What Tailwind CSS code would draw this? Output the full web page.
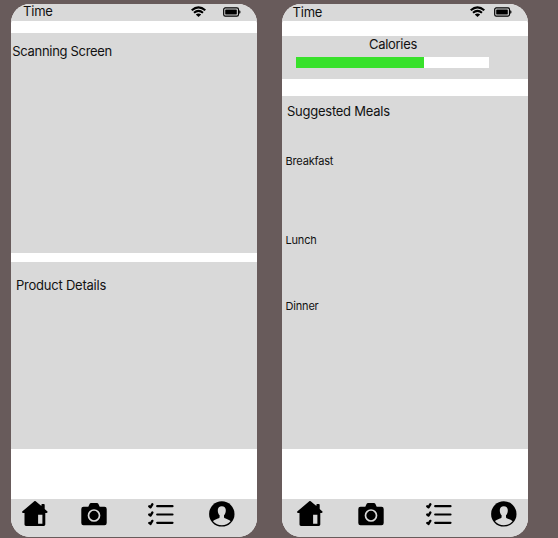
<!DOCTYPE html>
<html lang="en">
<head>
<meta charset="utf-8">
<title>Meal scanner</title>
<script src="https://cdn.jsdelivr.net/npm/@tailwindcss/browser@4"></script>
</head>
<body class="flex h-[538px] w-[558px] gap-[25px] overflow-hidden bg-[#685b5b] pt-[3.5px] pl-[10.5px] font-['Inter',sans-serif] text-[13px] leading-4 tracking-[-0.31px] text-[#111]">
<svg class="hidden">
  <symbol id="wifi" viewBox="0 0 15 11"><path d="M.7 4.3Q7.5-1.7 14.3 4.3M3 6.7Q7.5 3 12 6.7" fill="none" stroke="#000" stroke-width="2.1"/><path d="M4.8 8.4Q7.5 6.5 10.2 8.4L7.5 10.9Z"/></symbol>
  <symbol id="battery" viewBox="0 0 18 10"><rect x=".7" y=".9" width="14.8" height="8.2" rx="1.6" fill="none" stroke="#000" stroke-width="1.2"/><rect x="2.2" y="2.5" width="11.6" height="5" rx=".4"/><path d="M16.2 3.2q1.3.2 1.3 1.8t-1.3 1.8z"/></symbol>
  <symbol id="home" viewBox="0 0 26 26"><path fill-rule="evenodd" d="M12 .4q1-.9 2 0l5.4 4.7V3.9q0-.8.8-.8h1.7q.8 0 .8.8v4.2l2.5 2.2q.6.6.2 1.2t-1.2.4H23.3v11.7q0 1.4-1.5 1.4H4q-1.5 0-1.5-1.4V11.9H1q-.8 0-.9-.6t.4-1ZM16.1 13.7v9h4.3v-9Z"/></symbol>
  <symbol id="camera" viewBox="0 0 26 23"><path d="M7.3 3.8L8.7.8Q9.2.1 10 .1h6q.8 0 1.3.7l1.4 3h4.8q2.2 0 2.2 2.2v14q0 2.2-2.2 2.2h-21Q.3 22.2.3 20v-14Q.3 3.8 2.5 3.8Z"/><circle cx="13" cy="12.5" r="5.5" fill="none" stroke="#d9d9d9" stroke-width="1.7"/></symbol>
  <symbol id="list" viewBox="0 0 26 23"><path d="M9.2 3.2H24.5M9.2 11.5H24.5M9.2 19.8H24.5" stroke="#000" stroke-width="2.2" stroke-linecap="round"/><path d="M1.3 3.3L2.5 4.3 4.3 1.3M1.3 11.6l1.2 1 1.8-3M1.3 19.9l1.2 1 1.8-3" fill="none" stroke="#000" stroke-width="2.4" stroke-linecap="round" stroke-linejoin="round"/></symbol>
  <symbol id="user" viewBox="0 0 26 26"><circle cx="12.8" cy="12.9" r="12.7"/><path fill="#d9d9d9" d="M12.8 5.2c-2.7 0-4 1.8-4 4.2 0 2 .7 3.8 1.8 4.8v2.1c0 1.6-5.2 1.7-6.6 4C6.5 23 9.3 24.2 12.8 24.2S19.1 23 21.6 20.3c-1.4-2.3-6.6-2.4-6.6-4v-2.1C16.1 13.2 16.8 11.4 16.8 9.4c0-2.4-1.3-4.2-4-4.2Z"/></symbol>
</svg>

<main class="flex h-[533.5px] w-[246px] shrink-0 flex-col overflow-hidden rounded-[19px] bg-white">
  <header class="flex h-[17.5px] shrink-0 items-start bg-[#d9d9d9] pl-[12.5px]">
    <span class="-mt-[0.6px] w-[168px] tracking-[-0.2px]">Time</span>
    <svg class="mt-[2.5px] h-[11px] w-[15px]"><use href="#wifi"/></svg>
    <svg class="mt-[3.5px] ml-[17px] h-[10px] w-[18px]"><use href="#battery"/></svg>
  </header>
  <section class="mt-3 h-[219.5px] shrink-0 bg-[#d9d9d9] pt-[10px] pl-[1.8px]"><h1>Scanning Screen</h1></section>
  <section class="mt-[9px] h-[187px] shrink-0 bg-[#d9d9d9] pt-[15px] pl-[5.5px] tracking-[-0.23px]"><h2>Product Details</h2></section>
  <nav class="mt-auto flex h-[38px] shrink-0 items-start bg-[#d9d9d9] pl-[11.5px]">
    <svg class="mt-[1.5px] h-[26px] w-[26px]"><use href="#home"/></svg>
    <svg class="mt-[3.5px] ml-[33px] h-[23px] w-[26px]"><use href="#camera"/></svg>
    <svg class="mt-[3.5px] ml-[41px] h-[23px] w-[26px]"><use href="#list"/></svg>
    <svg class="mt-[2px] ml-[34.5px] h-[26px] w-[26px]"><use href="#user"/></svg>
  </nav>
</main>

<main class="flex h-[533.5px] w-[246.5px] shrink-0 flex-col overflow-hidden rounded-[19px] bg-white">
  <header class="flex h-[17.5px] shrink-0 items-start bg-[#d9d9d9] pl-[11px]">
    <span class="w-[177px] tracking-[-0.2px]">Time</span>
    <svg class="mt-[2.5px] h-[11px] w-[15px]"><use href="#wifi"/></svg>
    <svg class="mt-[3.5px] ml-[9.5px] h-[10px] w-[18px]"><use href="#battery"/></svg>
  </header>
  <section class="mt-[15px] h-[42.5px] shrink-0 bg-[#d9d9d9] pl-[14.5px]">
    <h1 class="w-[194px] text-center">Calories</h1>
    <div class="mt-[4.5px] h-[11px] w-[193px] bg-white"><div class="h-full bg-[#38e12b]" style="width:66.5%"></div></div>
  </section>
  <section class="mt-[17px] h-[353px] shrink-0 bg-[#d9d9d9] pt-[7px] pl-[4px]">
    <h2 class="pl-[1.5px] tracking-[-0.25px]">Suggested Meals</h2>
    <ul class="pt-[34.3px] text-[11px] tracking-[-0.18px]">
      <li class="h-[79px]">Breakfast</li>
      <li class="h-[66px]">Lunch</li>
      <li>Dinner</li>
    </ul>
  </section>
  <nav class="mt-auto flex h-[38px] shrink-0 items-start bg-[#d9d9d9] pl-[15.5px]">
    <svg class="mt-[1.5px] h-[26px] w-[26px]"><use href="#home"/></svg>
    <svg class="mt-[3.5px] ml-[34.5px] h-[23px] w-[26px]"><use href="#camera"/></svg>
    <svg class="mt-[3.5px] ml-[42px] h-[23px] w-[26px]"><use href="#list"/></svg>
    <svg class="mt-[2px] ml-[39.5px] h-[26px] w-[26px]"><use href="#user"/></svg>
  </nav>
</main>
</body>
</html>
